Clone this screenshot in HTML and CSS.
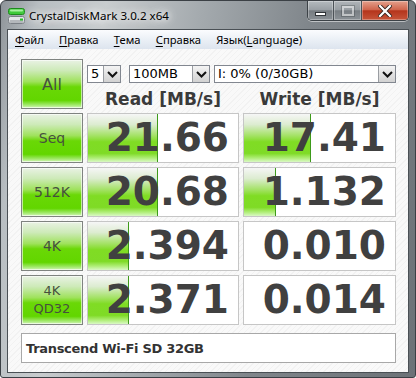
FILE: index.html
```html
<!DOCTYPE html>
<html lang="ru">
<head>
    <meta charset="UTF-8">
    <title>CrystalDiskMark 3.0.2 x64</title>
    <link rel="stylesheet" href="styles.css">
</head>
<body>
    <div class="window">
        <div class="titlebar">
            <svg class="app-icon" width="17" height="17" viewBox="0 0 17 17">
                <rect x="0.5" y="0.5" width="16" height="6" rx="2" fill="#3fc93a" stroke="#1c8a1c"/>
                <rect x="2" y="1.5" width="13" height="2" rx="1" fill="#a8f0a0"/>
                <rect x="0.5" y="8.5" width="16" height="7" rx="2" fill="#e4e6e8" stroke="#7b8086"/>
                <rect x="1.5" y="12" width="14" height="3" rx="1" fill="#b4b8bc"/>
                <rect x="12" y="10.5" width="3" height="2" fill="#22c022"/>
            </svg>
            <span class="title">CrystalDiskMark 3.0.2 x64</span>
            <div class="caption-buttons">
                <div class="cap-btn cap-min"><span class="min-glyph"></span></div>
                <div class="cap-btn cap-max"><span class="max-glyph"></span></div>
                <div class="cap-btn cap-close">
                    <svg width="14" height="12" viewBox="0 0 14 12">
                        <path d="M2 1 L12 11 M12 1 L2 11" stroke="#3a2520" stroke-width="4" stroke-linecap="square"/>
                        <path d="M2 1 L12 11 M12 1 L2 11" stroke="#ffffff" stroke-width="2.2" stroke-linecap="square"/>
                    </svg>
                </div>
            </div>
        </div>

        <div class="frame">
            <div class="inner">
                <nav class="menubar">
                    <span class="menu-item"><u>Ф</u>айл</span>
                    <span class="menu-item"><u>П</u>равка</span>
                    <span class="menu-item"><u>Т</u>ема</span>
                    <span class="menu-item"><u>С</u>правка</span>
                    <span class="menu-item">Язык(<u>L</u>anguage)</span>
                </nav>

                <main class="client">
                    <div class="grid">
                        <div class="test-btn label-all">All</div>
                        <div class="top-area">
                            <div class="combos">
                                <div class="combo combo-count"><span class="combo-text">5</span><span class="combo-arrow"><svg width="11" height="7" viewBox="0 0 11 7"><path d="M1 1 L5.5 5.5 L10 1" fill="none" stroke="#111" stroke-width="2"/></svg></span></div>
                                <div class="combo combo-size"><span class="combo-text">100MB</span><span class="combo-arrow"><svg width="11" height="7" viewBox="0 0 11 7"><path d="M1 1 L5.5 5.5 L10 1" fill="none" stroke="#111" stroke-width="2"/></svg></span></div>
                                <div class="combo combo-drive"><span class="combo-text">I: 0% (0/30GB)</span><span class="combo-arrow"><svg width="11" height="7" viewBox="0 0 11 7"><path d="M1 1 L5.5 5.5 L10 1" fill="none" stroke="#111" stroke-width="2"/></svg></span></div>
                            </div>
                            <div class="headers">
                                <div class="col-head">Read [MB/s]</div>
                                <div class="col-head">Write [MB/s]</div>
                            </div>
                        </div>

                        <div class="test-btn">Seq</div>
                        <div class="value"><div class="bar" style="width: 69px"></div><span class="num">21.66</span></div>
                        <div class="value"><div class="bar" style="width: 66px"></div><span class="num">17.41</span></div>

                        <div class="test-btn">512K</div>
                        <div class="value"><div class="bar" style="width: 69px"></div><span class="num">20.68</span></div>
                        <div class="value"><div class="bar" style="width: 31px"></div><span class="num">1.132</span></div>

                        <div class="test-btn">4K</div>
                        <div class="value"><div class="bar" style="width: 40px"></div><span class="num">2.394</span></div>
                        <div class="value"><span class="num">0.010</span></div>

                        <div class="test-btn label-two">4K<br>QD32</div>
                        <div class="value"><div class="bar" style="width: 40px"></div><span class="num">2.371</span></div>
                        <div class="value"><span class="num">0.014</span></div>
                    </div>

                    <div class="comment">Transcend Wi-Fi SD 32GB</div>
                </main>
            </div>
        </div>
    </div>
</body>
</html>
```

FILE: styles.css
```css
body {
    margin: 0;
    background: #ffffff;
    font-family: "DejaVu Sans", Verdana, sans-serif;
}
.window {
    width: 416px;
    height: 378px;
    box-sizing: border-box;
    display: flex;
    flex-direction: column;
    border: 1px solid #3b4045;
    border-radius: 6px 6px 3px 3px;
    overflow: hidden;
    background: linear-gradient(100deg, #8e9499 0%, #b8bec2 8%, #c8ccce 22%, #a4aaae 42%, #80868b 65%, #6c7277 100%);
}
.titlebar {
    height: 28px;
    display: flex;
    align-items: flex-start;
    flex-shrink: 0;
}
.app-icon {
    margin: 7px 0 0 7px;
}
.title {
    margin: 7px 0 0 4px;
    font-family: "Noto Sans", sans-serif;
    font-size: 11.6px;
    line-height: 15px;
    color: #000;
    text-shadow: 0 0 6px #fff, 0 0 10px rgba(255, 255, 255, 0.9), 0 0 14px rgba(255, 255, 255, 0.7);
}
.caption-buttons {
    margin-left: auto;
    margin-right: 6px;
    display: flex;
    height: 19px;
    border: 1px solid #3c4247;
    border-top: none;
    border-radius: 0 0 5px 5px;
    overflow: hidden;
    box-shadow: 0 1px 0 rgba(255, 255, 255, 0.5);
}
.cap-btn {
    display: flex;
    align-items: center;
    justify-content: center;
    border-right: 1px solid #4c5257;
    box-shadow: inset 0 0 0 1px rgba(255, 255, 255, 0.3);
}
.cap-min {
    width: 25px;
    background: linear-gradient(#b4babe 0%, #9aa0a5 45%, #767c81 52%, #8a9095 100%);
}
.cap-max {
    width: 27px;
    background: linear-gradient(#b0b5b9 0%, #989ea3 45%, #787e83 52%, #8c9297 100%);
}
.cap-close {
    width: 46px;
    border-right: none;
    background: linear-gradient(#e4a08c 0%, #d0664e 45%, #b5351c 52%, #c6553a 100%);
}
.min-glyph {
    width: 9px;
    height: 2px;
    margin-top: 6px;
    background: #fff;
    border: 1px solid #2f3337;
}
.max-glyph {
    width: 8px;
    height: 6px;
    border: 2px solid rgba(255, 255, 255, 0.5);
    outline: 1px solid rgba(50, 55, 60, 0.3);
}
.frame {
    flex: 1;
    display: flex;
    padding: 0 6px 6px 6px;
}
.inner {
    flex: 1;
    display: flex;
    flex-direction: column;
    border: 1px solid #4a5055;
}
.menubar {
    height: 19px;
    display: flex;
    align-items: center;
    font-family: "Noto Sans", sans-serif;
    font-size: 11.2px;
    background: linear-gradient(#fbfcfe, #ebf0f6 50%, #dde4ee);
}
.menu-item {
    padding: 0 7.6px;
    color: #000;
}
.menu-item:first-child {
    padding-left: 7px;
}
.menu-item u {
    text-decoration-thickness: 1px;
    text-underline-offset: 2px;
}
.client {
    flex: 1;
    padding: 10px 12px 9px 13px;
    background: repeating-linear-gradient(135deg, #f9f9f9 0 3px, #f2f2f2 3px 4px);
}
.grid {
    display: grid;
    grid-template-columns: 62px 152px 153px;
    grid-template-rows: repeat(5, 50px);
    column-gap: 4px;
    row-gap: 4px;
}
.test-btn {
    box-sizing: border-box;
    border: 1px solid #7f8380;
    box-shadow: inset 0 0 0 1px rgba(255, 255, 255, 0.6);
    background: linear-gradient(#e9f2e4 0%, #cdeab8 22%, #9fe25c 45%, #6ad806 56%, #62d600 84%, #9de864 93%, #d4f6bc 100%);
    display: flex;
    align-items: center;
    justify-content: center;
    text-align: center;
    font-size: 14px;
    line-height: 17px;
    color: #46503e;
}
.label-all {
    font-size: 16px;
}
.label-two {
    font-size: 13px;
    line-height: 18px;
}
.top-area {
    grid-column: 2 / 4;
    display: flex;
    flex-direction: column;
}
.combos {
    display: flex;
    margin-top: 6px;
    height: 18px;
}
.combo {
    box-sizing: border-box;
    display: flex;
    align-items: stretch;
    background: #fff;
    border: 1px solid #828790;
    font-size: 13px;
    color: #000;
}
.combo-count {
    width: 34px;
    margin-right: 8px;
}
.combo-size {
    width: 81px;
    margin-right: 4px;
}
.combo-drive {
    flex: 1;
}
.combo-text {
    flex: 1;
    padding-left: 3px;
    line-height: 16px;
    white-space: nowrap;
    overflow: hidden;
}
.combo-arrow {
    width: 16px;
    display: flex;
    align-items: center;
    justify-content: center;
    border-left: 1px solid #9a9da2;
    background: linear-gradient(#f4f4f4, #e2e2e2 50%, #d2d2d2);
}
.headers {
    flex: 1;
    display: grid;
    grid-template-columns: 152px 153px;
    column-gap: 4px;
    align-items: end;
}
.col-head {
    text-align: center;
    font-weight: bold;
    font-size: 17px;
    line-height: 20px;
    color: #3a3a3a;
}
.value {
    position: relative;
    box-sizing: border-box;
    border: 1px solid #c6c6c6;
    background: #fff;
    display: flex;
    align-items: center;
    justify-content: flex-end;
    padding-right: 9px;
}
.bar {
    position: absolute;
    left: 0;
    top: 0;
    bottom: 0;
    border-right: 1px solid #3d9a1a;
    background: linear-gradient(#f6f6f6 0%, #dcecd0 22%, #a4e266 45%, #80dc24 58%, #7fdb26 82%, #b0ee78 92%, #daf8c6 100%);
}
.num {
    position: relative;
    font-weight: bold;
    font-size: 39px;
    line-height: 44px;
    color: #404040;
}
.comment {
    margin-top: 8px;
    height: 30px;
    box-sizing: border-box;
    width: 375px;
    border: 1px solid #a8a8a8;
    background: #fff;
    display: flex;
    align-items: center;
    padding-left: 4px;
    font-weight: bold;
    font-size: 13px;
    letter-spacing: -0.3px;
    color: #333;
}
```
